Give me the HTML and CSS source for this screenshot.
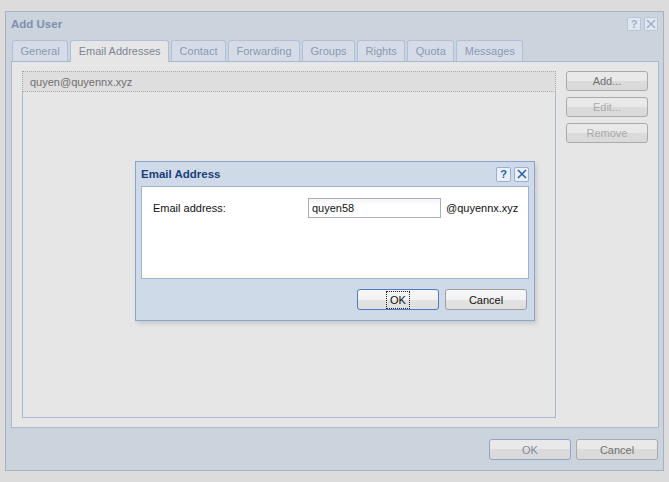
FILE: index.html
```html
<!DOCTYPE html>
<html>
<head>
<meta charset="utf-8">
<link rel="stylesheet" href="styles.css">
</head>
<body>
<div class="win">
  <div class="win-title">
    <span class="win-title-text">Add User</span>
    <div class="tools">
      <span class="tool">?</span>
      <span class="tool tool-x"><svg width="10" height="10" viewBox="0 0 10 10"><path d="M1 1L9 9M9 1L1 9" stroke="currentColor" stroke-width="1.6"/></svg></span>
    </div>
  </div>
  <div class="tabs">
    <span class="tab">General</span>
    <span class="tab active">Email Addresses</span>
    <span class="tab">Contact</span>
    <span class="tab">Forwarding</span>
    <span class="tab">Groups</span>
    <span class="tab">Rights</span>
    <span class="tab">Quota</span>
    <span class="tab">Messages</span>
  </div>
  <div class="panel">
    <div class="list">
      <div class="row">quyen@quyennx.xyz</div>
    </div>
    <div class="side">
      <span class="btn">Add...</span>
      <span class="btn disabled">Edit...</span>
      <span class="btn disabled">Remove</span>
    </div>
  </div>
  <div class="win-foot">
    <span class="btn btn-default">OK</span>
    <span class="btn">Cancel</span>
  </div>
</div>

<div class="modal">
  <div class="m-title">
    <span class="m-title-text">Email Address</span>
    <div class="tools">
      <span class="tool m-tool">?</span>
      <span class="tool m-tool"><svg width="10" height="10" viewBox="0 0 10 10"><path d="M1 1L9 9M9 1L1 9" stroke="currentColor" stroke-width="1.6"/></svg></span>
    </div>
  </div>
  <div class="m-body">
    <div class="field">
      <span class="label">Email address:</span>
      <span class="input">quyen58</span>
      <span class="suffix">@quyennx.xyz</span>
    </div>
  </div>
  <div class="m-foot">
    <span class="mbtn mbtn-default"><span class="focus">OK</span></span>
    <span class="mbtn">Cancel</span>
  </div>
</div>
</body>
</html>
```

FILE: styles.css
```css
* { box-sizing: border-box; }
html, body { margin: 0; padding: 0; }
body {
  width: 669px;
  height: 482px;
  background: #dcdcdc;
  font-family: "Liberation Sans", Arial, sans-serif;
  font-size: 11px;
  position: relative;
  overflow: hidden;
}
.win {
  margin: 11px 0 0 5px;
  width: 659px;
  height: 460px;
  border: 1px solid #a9b1be;
  background: #cbd3dd;
  display: flex;
  flex-direction: column;
}
.win-title {
  height: 28px;
  display: flex;
  align-items: center;
  justify-content: space-between;
  padding: 0 5px 4px 5px;
}
.win-title-text {
  font-weight: bold;
  font-size: 11.5px;
  color: #7d90b0;
}
.tools { display: flex; gap: 3px; }
.tool {
  width: 14px;
  height: 14px;
  border: 1px solid #b9c6d9;
  border-radius: 2px;
  background: #dfe6ef;
  color: #9fb0c9;
  font-weight: bold;
  font-size: 11px;
  display: flex;
  align-items: center;
  justify-content: center;
  line-height: 1;
}
.tabs {
  display: flex;
  gap: 2px;
  padding-left: 6px;
  height: 21px;
  align-items: flex-end;
}
.tab {
  height: 21px;
  padding: 0 7.5px;
  display: flex;
  align-items: center;
  border: 1px solid #afc0da;
  border-bottom: none;
  border-radius: 3px 3px 0 0;
  background: #d5dce7;
  color: #8a9ab3;
  font-size: 11px;
}
.tab.active {
  height: 22px;
  background: #e6e6e6;
  color: #7c8597;
  position: relative;
  margin-bottom: -1px;
  padding-bottom: 1px;
}
.panel {
  margin-left: 5px;
  width: 648px;
  height: 367px;
  border: 1px solid #a9b9d4;
  background: #e6e6e6;
  padding: 9px 10px 10px 10px;
  display: flex;
  gap: 10px;
}
.list {
  width: 534px;
  flex-shrink: 0;
  height: 347px;
  border: 1px solid #a9b9d3;
  background: #e6e6e6;
}
.row {
  height: 21px;
  margin: -1px -1px 0 -1px;
  border: 1px dotted #a9a9a9;
  background: #dedede;
  color: #707070;
  padding-left: 7px;
  display: flex;
  align-items: center;
  font-size: 11px;
}
.side {
  display: flex;
  flex-direction: column;
  gap: 6px;
}
.btn {
  width: 82px;
  height: 20px;
  border: 1px solid #aaaaaa;
  border-radius: 3px;
  background: linear-gradient(#e9e9e9 0, #e9e9e9 50%, #dadada 50%, #dadada 100%);
  color: #727272;
  display: flex;
  align-items: center;
  justify-content: center;
  font-size: 11px;
}
.btn.disabled { color: #a9a9a9; }
.win-foot {
  flex: 1;
  display: flex;
  justify-content: flex-end;
  gap: 5px;
  padding: 11px 5px 0 0;
}
.win-foot .btn { height: 21px; }
.btn-default { border-color: #8fa5c9; color: #7f8a9b; }

.modal {
  position: absolute;
  left: 135px;
  top: 161px;
  width: 400px;
  height: 160px;
  border: 1px solid #8ca4cc;
  background: #cfdae8;
  box-shadow: 2px 3px 4px rgba(0,0,0,0.12);
  display: flex;
  flex-direction: column;
  padding: 0 5px;
}
.m-title {
  height: 24px;
  display: flex;
  align-items: center;
  justify-content: space-between;
}
.m-title-text {
  font-weight: bold;
  font-size: 11.5px;
  color: #1b3f7c;
}
.m-tool {
  width: 15px;
  height: 15px;
  background: #eaf0f8;
  border-color: #99b0d4;
  color: #2c5fa8;
}
.m-body {
  height: 93px;
  background: #fff;
  border: 1px solid #9cb3d9;
  padding: 11px 11px 0 11px;
}
.field {
  display: flex;
  align-items: center;
}
.label {
  width: 155px;
  flex-shrink: 0;
  color: #111;
  font-size: 11px;
}
.input {
  width: 133px;
  flex-shrink: 0;
  height: 20px;
  border: 1px solid #a9b0bb;
  background: linear-gradient(#f4f4f4, #fff 6px);
  padding-left: 3px;
  display: flex;
  align-items: center;
  color: #111;
  font-size: 11px;
}
.suffix {
  margin-left: 5px;
  color: #111;
  font-size: 11px;
}
.m-foot {
  flex: 1;
  display: flex;
  justify-content: flex-end;
  gap: 6px;
  padding: 10px 2px 0 0;
}
.mbtn {
  width: 82px;
  height: 21px;
  border: 1px solid #a0a0a0;
  border-radius: 3px;
  background: linear-gradient(#f7f7f7 0, #f2f2f2 50%, #e3e3e3 50%, #dedede 100%);
  color: #111;
  display: flex;
  align-items: center;
  justify-content: center;
  font-size: 11px;
}
.mbtn-default { border-color: #4f7bc4; }
.focus {
  border: 1px dotted #222;
  padding: 1px 3px;
  line-height: 14px;
}
```
